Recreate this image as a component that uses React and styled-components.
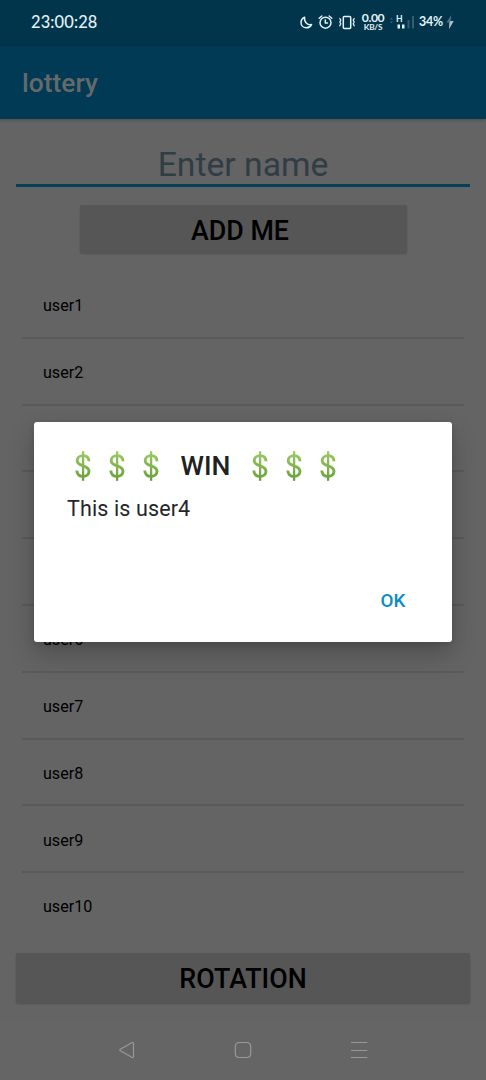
import React from "react";
import styled, { createGlobalStyle } from "styled-components";

const GlobalStyle = createGlobalStyle`
  * {
    box-sizing: border-box;
  }
  body {
    margin: 0;
    background: #646464;
    font-family: Roboto, sans-serif;
  }
  button {
    font-family: inherit;
    border: none;
    padding: 0;
  }
`;

const Screen = styled.div`
  position: relative;
  display: flex;
  flex-direction: column;
  width: 486px;
  height: 1080px;
  overflow: hidden;
  background: #646464;
`;

const StatusBar = styled.div`
  display: flex;
  justify-content: space-between;
  align-items: center;
  height: 46px;
  padding: 0 32px 3px 31px;
  background: #00354c;
  color: #e4f1f5;
`;

const Clock = styled.span`
  font-family: Lato, sans-serif;
  font-size: 16.4px;
  font-weight: 500;
  letter-spacing: 0.15px;
`;

const StatusIcons = styled.div`
  display: flex;
  align-items: center;
`;

const Speed = styled.div`
  display: flex;
  flex-direction: column;
  align-items: center;
  width: 24px;
  margin: 0 5px;
  font-family: Lato, sans-serif;
  font-weight: 700;
  font-size: 12.2px;
  line-height: 11px;
  letter-spacing: -0.4px;
  white-space: nowrap;
`;

const Unit = styled.span`
  font-size: 8.2px;
  line-height: 8px;
  letter-spacing: -0.2px;
`;

const Battery = styled.span`
  margin: 0 2px 0 4px;
  width: 25px;
  font-family: Lato, sans-serif;
  font-size: 12.4px;
  font-weight: 700;
  letter-spacing: -0.2px;
`;

const AppBar = styled.header`
  display: flex;
  align-items: center;
  height: 73px;
  padding: 0 22px;
  background: #003a54;
  color: #66696b;
  font-size: 26.4px;
  font-weight: 500;
  box-shadow: 0 1px 3px rgba(0, 0, 0, 0.25);
`;

const Content = styled.main`
  display: flex;
  flex-direction: column;
  align-items: center;
  padding: 24px 16px 0;
`;

const NameInput = styled.input`
  width: 100%;
  height: 44px;
  margin-bottom: 18px;
  padding: 2px 0 0;
  border: none;
  border-bottom: 3px solid #053f58;
  outline: none;
  background: transparent;
  font-family: inherit;
  font-size: 33.7px;
  text-align: center;
  &::placeholder {
    color: #2f3d45;
    opacity: 1;
  }
`;

const ActionButton = styled.button`
  width: ${(props) => props.$width};
  height: ${(props) => props.$height};
  padding: ${(props) => props.$padding};
  border-radius: 2px;
  background: #565656;
  color: #000;
  font-size: 26.8px;
  font-weight: 500;
  box-shadow: 0 1px 2px rgba(0, 0, 0, 0.2);
`;

const UserList = styled.ul`
  width: 442px;
  margin: 19px 0 13px;
  padding: 0;
  list-style: none;
`;

const UserRow = styled.li`
  display: flex;
  align-items: center;
  height: 66.8px;
  padding: 2.6px 0 0 21px;
  border-bottom: 2px solid #5a5a5a;
  color: #000;
  font-size: 16.1px;
  &:last-child {
    border-bottom-color: transparent;
  }
`;

const NavBar = styled.nav`
  display: flex;
  justify-content: center;
  align-items: center;
  gap: 98px;
  height: 60px;
  margin-top: auto;
  background: #656565;
`;

const Overlay = styled.div`
  position: absolute;
  top: 422px;
  left: 34px;
`;

const Dialog = styled.div`
  display: flex;
  flex-direction: column;
  width: 418px;
  height: 220px;
  padding: 26px 33px 20px;
  border-radius: 3px;
  background: #fff;
  box-shadow: 0 12px 26px rgba(0, 0, 0, 0.22), 0 2px 6px rgba(0, 0, 0, 0.12);
`;

const DialogTitle = styled.h2`
  display: flex;
  align-items: center;
  height: 36px;
  margin: 0;
  padding-left: 7px;
  color: #212121;
  font-size: 26.6px;
  font-weight: 500;
`;

const Dollars = styled.span`
  display: flex;
  gap: 15.8px;
`;

const Win = styled.span`
  margin: 0 21px;
  padding-bottom: 2px;
`;

const Message = styled.p`
  margin: 12px 0 0;
  color: #242628;
  font-size: 21.5px;
  line-height: 26px;
  letter-spacing: 0.12px;
`;

const OkButton = styled.button`
  align-self: flex-end;
  width: 52px;
  height: 42px;
  margin-top: auto;
  background: transparent;
  color: #0a8cc4;
  font-size: 18.8px;
  font-weight: 500;
`;

const Dollar = () => (
  <svg width="18" height="32" viewBox="0 0 18 32" fill="none">
    <defs>
      <linearGradient
        id="bill"
        gradientUnits="userSpaceOnUse"
        x1="0"
        y1="1"
        x2="0"
        y2="31"
      >
        <stop offset="0" stopColor="#9ccc65" />
        <stop offset="1" stopColor="#689f38" />
      </linearGradient>
    </defs>
    <path
      d="M15 11.2C15 7.8 12.7 5.6 9.2 5.6C5.6 5.6 3.2 7.7 3.2 10.5C3.2 13.7 5.8 14.8 9.1 15.8C12.5 16.9 15 18 15 21.3C15 24.3 12.6 26.4 9.1 26.4C5.3 26.4 2.8 24.2 2.8 20.6"
      stroke="url(#bill)"
      strokeWidth="2.9"
    />
    <path d="M9.1 1.2V30.8" stroke="url(#bill)" strokeWidth="2.3" />
  </svg>
);

const DollarGroup = () => (
  <Dollars>
    <Dollar />
    <Dollar />
    <Dollar />
  </Dollars>
);

// moon, alarm and vibrate
const ModeIcons = () => (
  <svg
    width="56"
    height="18"
    viewBox="0 0 56 18"
    fill="none"
    stroke="#e4f1f5"
    strokeWidth="1.5"
    strokeLinecap="round"
    strokeLinejoin="round"
  >
    <path d="M4.6 4.2C2.4 5.2 1 7.2 1 9.5C1 12.6 3.4 14.8 6.3 14.8C8.6 14.8 10.6 13.6 11.6 11.6C7.4 12.4 3.8 9 4.6 4.2Z" />
    <circle cx="25.5" cy="9.7" r="5.5" />
    <path d="M25.3 7V10H27.5M19.2 5.2L21.8 3M31.8 5.2L29.2 3" />
    <rect x="43.3" y="3.6" width="7.4" height="12" rx="1" />
    <path
      d="M39.8 5.5L40.8 7.2L39.8 9L40.8 10.8L39.8 12.8M54.2 5.5L53.2 7.2L54.2 9L53.2 10.8L54.2 12.8"
      strokeWidth="1.3"
    />
  </svg>
);

const SignalText = styled.text`
  font-family: Lato, sans-serif;
  font-size: 8.6px;
  font-weight: 700;
`;

const Signal = () => (
  <svg width="25" height="18" viewBox="0 0 25 18">
    <path d="M0 6.5L1.5 4.8L3 6.5ZM0 8.5L1.5 10.2L3 8.5Z" fill="#406b7d" />
    <SignalText x="6" y="9" fill="#e4f1f5">
      H
    </SignalText>
    <path d="M7.5 11.5H10V15.5H7.5ZM12 11.5H14.5V15.5H12Z" fill="#e4f1f5" />
    <path d="M17.5 7H19.5V15.5H17.5ZM22 3H24V15.5H22Z" fill="#335d70" />
  </svg>
);

const Bolt = () => (
  <svg width="8" height="14" viewBox="0 0 8 14">
    <path d="M5.3 0L0.5 7.5H3.5L3 14L7.7 6H4.7Z" fill="#4d7382" />
    <path d="M4.7 6H7.7L3 14L3.5 7.5Z" fill="#a9c0c9" />
  </svg>
);

const navIcons = [
  "M15.5 3.3V16.7C15.5 17.6 14.8 17.8 14.2 17.4L2.4 10.8C1.6 10.3 1.6 9.7 2.4 9.2L14.2 2.6C14.8 2.2 15.5 2.4 15.5 3.3Z",
  "M5.5 2.5H12.5Q16.7 2.5 16.7 6.5V13.5Q16.7 17.5 12.5 17.5H5.5Q1.3 17.5 1.3 13.5V6.5Q1.3 2.5 5.5 2.5Z",
  "M1 2.5H17.3M1 10.5H17.3M1 17.5H17.3",
];

const users = Array.from({ length: 10 }, (_, i) => `user${i + 1}`);

const App = () => {
  return (
    <Screen>
      <GlobalStyle />
      <StatusBar>
        <Clock>23:00:28</Clock>
        <StatusIcons>
          <ModeIcons />
          <Speed>
            0.00
            <Unit>KB/S</Unit>
          </Speed>
          <Signal />
          <Battery>34%</Battery>
          <Bolt />
        </StatusIcons>
      </StatusBar>
      <AppBar>lottery</AppBar>
      <Content>
        <NameInput placeholder="Enter name" />
        <ActionButton $width="327px" $height="48px" $padding="4px 6px 0 0">
          ADD ME
        </ActionButton>
        <UserList>
          {users.map((user) => (
            <UserRow key={user}>{user}</UserRow>
          ))}
        </UserList>
        <ActionButton $width="454px" $height="50px" $padding="2px 0 0">
          ROTATION
        </ActionButton>
      </Content>
      <NavBar>
        {navIcons.map((d) => (
          <svg key={d} width="18" height="20" viewBox="0 0 18 20" fill="none">
            <path d={d} stroke="#989898" strokeWidth="1.2" />
          </svg>
        ))}
      </NavBar>
      <Overlay>
        <Dialog role="dialog">
          <DialogTitle>
            <DollarGroup />
            <Win>WIN</Win>
            <DollarGroup />
          </DialogTitle>
          <Message>This is user4</Message>
          <OkButton>OK</OkButton>
        </Dialog>
      </Overlay>
    </Screen>
  );
};

export default App;
